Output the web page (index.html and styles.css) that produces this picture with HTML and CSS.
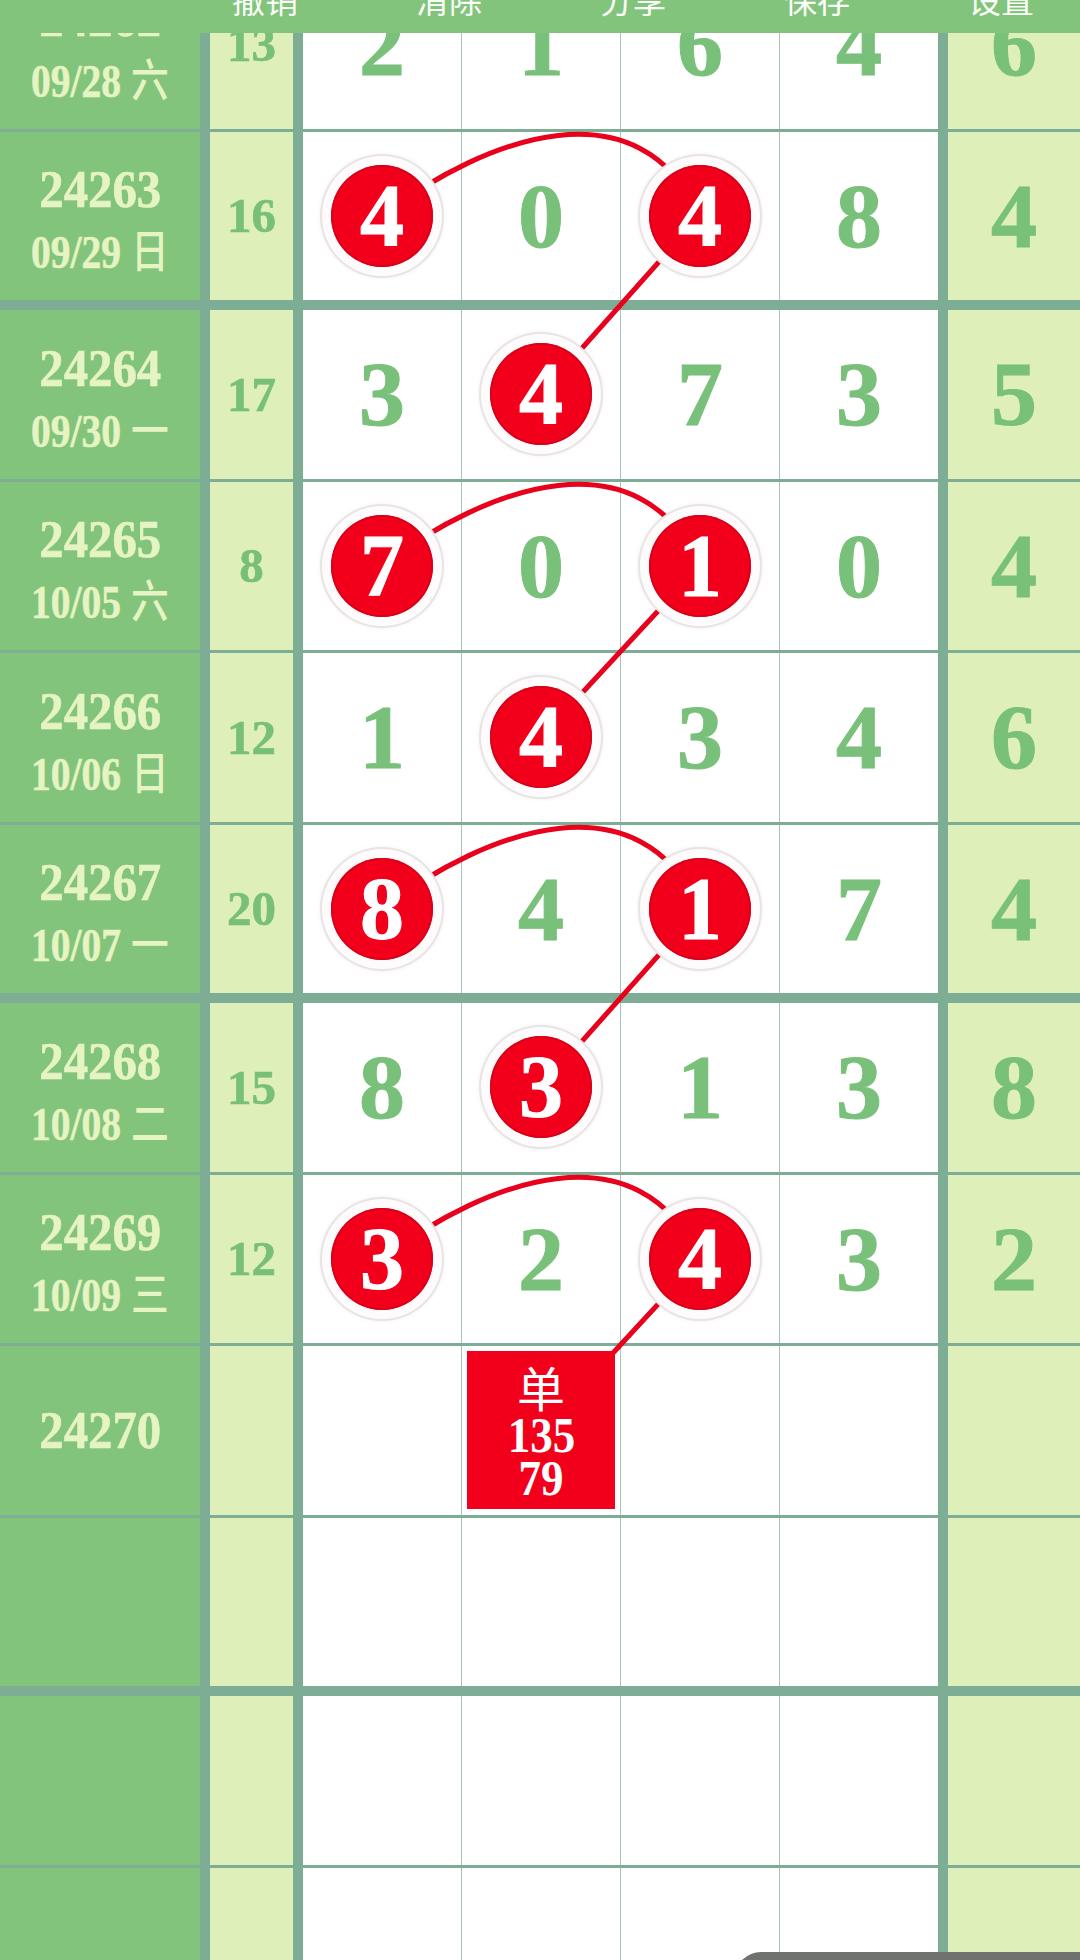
FILE: index.html
```html
<!DOCTYPE html>
<html lang="zh-CN">
<head>
<meta charset="utf-8">
<title>走势图</title>
<link rel="stylesheet" href="styles.css">
</head>
<body>
<div class="toolbar">
  <div class="tool">撤销</div>
  <div class="tool">清除</div>
  <div class="tool">分享</div>
  <div class="tool">保存</div>
  <div class="tool">设置</div>
</div>

<div class="sheet">
  <svg class="links" viewBox="0 0 1080 2076" width="1080" height="2076">
    <g fill="none" stroke="#e8001c" stroke-width="5" stroke-linecap="round">
      <path d="M382 255.75 C489 174.75 639 122.75 700 255.75"/>
      <path d="M700 255.75 L541 434.25"/>
      <path d="M382 605.75 C489 524.75 639 472.75 700 605.75"/>
      <path d="M700 605.75 L541 777.25"/>
      <path d="M382 948.75 C489 867.75 639 815.75 700 948.75"/>
      <path d="M700 948.75 L541 1127.25"/>
      <path d="M382 1298.75 C489 1217.75 639 1165.75 700 1298.75"/>
      <path d="M700 1298.75 L613 1393"/>
    </g>
  </svg>

  <div class="row">
    <div class="issue two"><div class="no">24262</div><div class="date">09/28 <span class="wd">六</span></div></div>
    <div class="sum">13</div>
    <div class="cells">
      <div class="cell">2</div><div class="cell">1</div><div class="cell">6</div><div class="cell">4</div>
    </div>
    <div class="tail">6</div>
  </div>

  <div class="row group-end">
    <div class="issue two"><div class="no">24263</div><div class="date">09/29 <span class="wd">日</span></div></div>
    <div class="sum">16</div>
    <div class="cells">
      <div class="cell"><span class="ball">4</span></div><div class="cell">0</div><div class="cell"><span class="ball">4</span></div><div class="cell">8</div>
    </div>
    <div class="tail">4</div>
  </div>

  <div class="row">
    <div class="issue two"><div class="no">24264</div><div class="date">09/30 <span class="wd">一</span></div></div>
    <div class="sum">17</div>
    <div class="cells">
      <div class="cell">3</div><div class="cell"><span class="ball">4</span></div><div class="cell">7</div><div class="cell">3</div>
    </div>
    <div class="tail">5</div>
  </div>

  <div class="row">
    <div class="issue two"><div class="no">24265</div><div class="date">10/05 <span class="wd">六</span></div></div>
    <div class="sum">8</div>
    <div class="cells">
      <div class="cell"><span class="ball">7</span></div><div class="cell">0</div><div class="cell"><span class="ball">1</span></div><div class="cell">0</div>
    </div>
    <div class="tail">4</div>
  </div>

  <div class="row">
    <div class="issue two"><div class="no">24266</div><div class="date">10/06 <span class="wd">日</span></div></div>
    <div class="sum">12</div>
    <div class="cells">
      <div class="cell">1</div><div class="cell"><span class="ball">4</span></div><div class="cell">3</div><div class="cell">4</div>
    </div>
    <div class="tail">6</div>
  </div>

  <div class="row group-end">
    <div class="issue two"><div class="no">24267</div><div class="date">10/07 <span class="wd">一</span></div></div>
    <div class="sum">20</div>
    <div class="cells">
      <div class="cell"><span class="ball">8</span></div><div class="cell">4</div><div class="cell"><span class="ball">1</span></div><div class="cell">7</div>
    </div>
    <div class="tail">4</div>
  </div>

  <div class="row">
    <div class="issue two"><div class="no">24268</div><div class="date">10/08 <span class="wd">二</span></div></div>
    <div class="sum">15</div>
    <div class="cells">
      <div class="cell">8</div><div class="cell"><span class="ball">3</span></div><div class="cell">1</div><div class="cell">3</div>
    </div>
    <div class="tail">8</div>
  </div>

  <div class="row">
    <div class="issue two"><div class="no">24269</div><div class="date">10/09 <span class="wd">三</span></div></div>
    <div class="sum">12</div>
    <div class="cells">
      <div class="cell"><span class="ball">3</span></div><div class="cell">2</div><div class="cell"><span class="ball">4</span></div><div class="cell">3</div>
    </div>
    <div class="tail">2</div>
  </div>

  <div class="row">
    <div class="issue"><div class="no">24270</div></div>
    <div class="sum"></div>
    <div class="cells">
      <div class="cell"></div>
      <div class="cell top">
        <div class="pick"><div class="pick-kind">单</div><div class="pick-a">135</div><div class="pick-b">79</div></div>
      </div>
      <div class="cell"></div><div class="cell"></div>
    </div>
    <div class="tail"></div>
  </div>

  <div class="row group-end">
    <div class="issue"></div>
    <div class="sum"></div>
    <div class="cells"><div class="cell"></div><div class="cell"></div><div class="cell"></div><div class="cell"></div></div>
    <div class="tail"></div>
  </div>

  <div class="row">
    <div class="issue"></div>
    <div class="sum"></div>
    <div class="cells"><div class="cell"></div><div class="cell"></div><div class="cell"></div><div class="cell"></div></div>
    <div class="tail"></div>
  </div>

  <div class="row">
    <div class="issue"></div>
    <div class="sum"></div>
    <div class="cells"><div class="cell"></div><div class="cell"></div><div class="cell"></div><div class="cell"></div></div>
    <div class="tail"></div>
  </div>
</div>

<div class="toast"></div>
</body>
</html>
```

FILE: styles.css
```css
html, body {
  margin: 0;
  padding: 0;
}

body {
  width: 1080px;
  height: 1960px;
  overflow: hidden;
  background: #7dae95;
  font-family: "Liberation Serif", "Noto Sans CJK SC", serif;
  font-weight: 700;
}

.toolbar {
  position: fixed;
  top: 0;
  left: 0;
  right: 0;
  height: 33px;
  background: #82c47c;
  z-index: 10;
  overflow: hidden;
  display: flex;
  padding-left: 173px;
}

.tool {
  flex: none;
  width: 184px;
  margin-top: -17px;
  text-align: center;
  font-family: "Noto Sans CJK SC", sans-serif;
  font-weight: 400;
  font-size: 33px;
  line-height: 32px;
  color: #fbfdf8;
}

.sheet {
  position: relative;
  margin-top: -40px;
  display: flex;
  flex-direction: column;
  gap: 3px;
  background: #7dae95;
}

.links {
  position: absolute;
  top: 0;
  left: 0;
  z-index: 1;
  pointer-events: none;
}

.row {
  display: grid;
  grid-template-columns: 200px 83px 635px 132px;
  column-gap: 10px;
  height: 168.5px;
  flex: none;
}

.row.group-end {
  margin-bottom: 7px;
}

.issue {
  background: #82c47c;
  color: #e6f3c2;
  display: flex;
  flex-direction: column;
  align-items: center;
  justify-content: center;
}

.issue.two {
  padding-top: 11px;
  box-sizing: border-box;
}

.no {
  font-size: 53px;
  line-height: 59px;
  transform: scaleX(0.92);
  -webkit-text-stroke: 0.6px currentColor;
}

.date {
  font-size: 47px;
  line-height: 59px;
  white-space: nowrap;
  transform: scaleX(0.84);
  -webkit-text-stroke: 0.6px currentColor;
}

.wd {
  font-family: "Noto Sans CJK SC", sans-serif;
  font-weight: 500;
  font-size: 45px;
  -webkit-text-stroke: 0;
}

.sum {
  background: #deefb9;
  color: #78bf78;
  font-size: 49px;
  -webkit-text-stroke: 0.6px currentColor;
  display: flex;
  align-items: center;
  justify-content: center;
}

.cells {
  display: grid;
  grid-template-columns: repeat(4, 1fr);
  column-gap: 1px;
  background: #a9c3b7;
}

.cell {
  background: #ffffff;
  color: #79c07a;
  font-size: 92px;
  line-height: 1;
  -webkit-text-stroke: 1px currentColor;
  display: flex;
  align-items: center;
  justify-content: center;
}

.cell.top {
  align-items: flex-start;
  justify-content: flex-start;
  padding: 5px 0 0 5px;
}

.tail {
  background: #deefb9;
  color: #79c07a;
  font-size: 92px;
  line-height: 1;
  -webkit-text-stroke: 1px currentColor;
  display: flex;
  align-items: center;
  justify-content: center;
}

.ball {
  position: relative;
  z-index: 2;
  width: 102px;
  height: 102px;
  border-radius: 50%;
  background: #f2001b;
  color: #ffffff;
  font-size: 88px;
  line-height: 102px;
  text-align: center;
  box-shadow: inset 0 0 0 2px #d9001a, 0 0 0 9px #fdfbfb, 0 0 0 11px #e9e3e4, 0 0 4px 11px rgba(0, 0, 0, 0.06);
}

.pick {
  position: relative;
  z-index: 2;
  width: 148px;
  height: 158px;
  box-sizing: border-box;
  padding-top: 9px;
  background: #f2001b;
  color: #ffffff;
  -webkit-text-stroke: 0;
  display: flex;
  flex-direction: column;
  align-items: center;
}

.pick-kind {
  font-family: "Noto Sans CJK SC", sans-serif;
  font-weight: 400;
  font-size: 48px;
  line-height: 52px;
}

.pick-a {
  font-size: 50px;
  line-height: 46px;
  transform: scaleX(0.9);
}

.pick-b {
  font-size: 50px;
  line-height: 40px;
  transform: scaleX(0.9);
}

.toast {
  position: fixed;
  right: 0;
  bottom: -22px;
  width: 345px;
  height: 30px;
  border-radius: 26px 0 0 0;
  background: #6f726f;
  z-index: 11;
}
```
